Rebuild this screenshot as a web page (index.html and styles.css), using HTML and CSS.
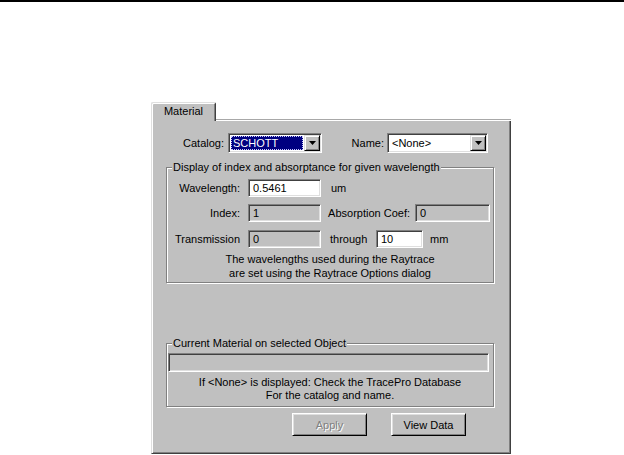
FILE: index.html
```html
<!DOCTYPE html>
<html lang="en">
<head>
    <meta charset="UTF-8">
    <title>Material</title>
    <link rel="stylesheet" href="styles.css">
</head>
<body>
    <div class="topline"></div>
    <div class="page">
        <div class="dialog">
            <div class="tabs">
                <div class="tab">Material</div>
                <div class="tab-rest"></div>
            </div>
            <div class="panel">
                <div class="catalog-row">
                    <span class="lbl lbl-catalog">Catalog:</span>
                    <div class="combo combo-catalog">
                        <span class="combo-text selected">SCHOTT</span>
                        <span class="drop-btn"><svg width="7" height="4" viewBox="0 0 7 4"><polygon points="0,0 7,0 3.5,4" fill="#000"/></svg></span>
                    </div>
                    <span class="lbl lbl-name">Name:</span>
                    <div class="combo combo-name">
                        <span class="combo-text">&lt;None&gt;</span>
                        <span class="drop-btn"><svg width="7" height="4" viewBox="0 0 7 4"><polygon points="0,0 7,0 3.5,4" fill="#000"/></svg></span>
                    </div>
                </div>

                <fieldset class="group group-index">
                    <legend>Display of index and absorptance for given wavelength</legend>
                    <div class="field-row">
                        <span class="lbl lbl-left">Wavelength:</span>
                        <div class="edit edit-main">0.5461</div>
                        <span class="unit unit-um">um</span>
                    </div>
                    <div class="field-row row-index">
                        <span class="lbl lbl-left">Index:</span>
                        <div class="edit edit-main disabled">1</div>
                        <span class="lbl lbl-absorb">Absorption Coef:</span>
                        <div class="edit edit-absorb disabled">0</div>
                    </div>
                    <div class="field-row row-trans">
                        <span class="lbl lbl-left">Transmission</span>
                        <div class="edit edit-main disabled">0</div>
                        <span class="lbl-through">through</span>
                        <div class="edit edit-through">10</div>
                        <span class="unit unit-mm">mm</span>
                    </div>
                    <p class="note note-index">The wavelengths used during the Raytrace<br>are set using the Raytrace Options dialog</p>
                </fieldset>

                <fieldset class="group group-current">
                    <legend>Current Material on selected Object</legend>
                    <div class="edit edit-current disabled"></div>
                    <p class="note note-current">If &lt;None&gt; is displayed: Check the TracePro Database<br>For the catalog and name.</p>
                </fieldset>

                <div class="button-row">
                    <button class="btn" disabled>Apply</button>
                    <button class="btn">View Data</button>
                </div>
            </div>
        </div>
    </div>
</body>
</html>
```

FILE: styles.css
```css
* {
    box-sizing: border-box;
}

body {
    margin: 0;
    background-color: #fff;
    font-family: "Liberation Sans", Arial, sans-serif;
    font-size: 11px;
    color: #000;
}

.topline {
    height: 2px;
    background-color: #000;
}

.page {
    padding: 100px 0 0 151px;
}

.dialog {
    width: 360px;
}

/* Tab strip */
.tabs {
    display: flex;
    height: 19px;
}

.tab {
    width: 65px;
    height: 19px;
    padding-top: 2px;
    text-align: center;
    background-color: #c0c0c0;
    border-top: 1px solid #dfdfdf;
    border-left: 1px solid #dfdfdf;
    border-right: 1px solid #404040;
    border-radius: 2px 2px 0 0;
    box-shadow: inset 1px 1px 0 #fff, inset -1px 0 0 #808080;
    line-height: 13px;
}

.tab-rest {
    flex: 1;
    border-bottom: 1px solid #fff;
    box-shadow: inset 0 -1px 0 #a8a8a8;
}

.panel {
    height: 333px;
    background-color: #c0c0c0;
    border-left: 1px solid #dfdfdf;
    border-right: 1px solid #404040;
    border-bottom: 1px solid #404040;
    box-shadow: inset 1px 0 0 #fff, inset -1px -1px 0 #808080;
    padding-top: 12px;
}

.lbl {
    display: inline-block;
    text-align: right;
    white-space: nowrap;
}

/* Catalog / Name row */
.catalog-row {
    display: flex;
    align-items: center;
    height: 20px;
}

.lbl-catalog {
    width: 72px;
    margin-right: 4px;
}

.lbl-name {
    width: 62px;
    margin-right: 3px;
}

.combo {
    display: flex;
    height: 20px;
    padding: 2px;
    background-color: #fff;
    border: 1px solid;
    border-color: #808080 #fff #fff #808080;
    box-shadow: inset 1px 1px 0 #404040, inset -1px -1px 0 #dfdfdf;
}

.combo-catalog {
    width: 94px;
}

.combo-name {
    width: 101px;
}

.combo-text {
    flex: 1;
    padding-left: 2px;
    line-height: 14px;
}

.combo-text.selected {
    margin: 0 1px 0 0;
    background-color: #000080;
    color: #fff;
    outline: 1px dotted #c8c8ff;
    outline-offset: -1px;
}

.drop-btn {
    display: flex;
    align-items: center;
    justify-content: center;
    width: 16px;
    height: 16px;
    margin: -1px -1px 0 0;
    background-color: #c0c0c0;
    border: 1px solid;
    border-color: #dfdfdf #000 #000 #dfdfdf;
    box-shadow: inset 1px 1px 0 #fff, inset -1px -1px 0 #808080;
}

/* Group boxes */
.group {
    margin: 8px 0 0 14px;
    width: 328px;
    padding: 0;
    border: 1px solid #808080;
    box-shadow: 1px 1px 0 #fff, inset 1px 1px 0 #fff;
}

.group legend {
    margin-left: 5px;
    padding: 0 1px;
    line-height: 13px;
    background-color: #c0c0c0;
}

.group-index {
    padding: 5px 0 2px 0;
}

.field-row {
    display: flex;
    align-items: center;
    height: 18px;
}

.row-index {
    margin-top: 7px;
}

.row-trans {
    margin-top: 8px;
}

.lbl-left {
    width: 73px;
    margin-right: 8px;
}

.lbl-absorb {
    width: 89px;
    margin-right: 5px;
}

.lbl-through {
    width: 46px;
    margin-left: 9px;
}

.unit-um {
    margin-left: 10px;
}

.unit-mm {
    margin-left: 7px;
}

.edit {
    height: 18px;
    padding: 1px 0 0 4px;
    line-height: 14px;
    background-color: #fff;
    border: 1px solid;
    border-color: #808080 #fff #fff #808080;
    box-shadow: inset 1px 1px 0 #404040, inset -1px -1px 0 #dfdfdf;
}

.edit.disabled {
    background-color: #c0c0c0;
}

.edit-main {
    width: 73px;
}

.edit-absorb {
    width: 75px;
}

.edit-through {
    width: 47px;
}

.note {
    margin: 4px 0 0 0;
    text-align: center;
    line-height: 14px;
}

.group-current {
    margin-top: 54px;
    padding: 3px 0 4px 0;
}

.edit-current {
    width: 321px;
    height: 19px;
    margin-left: 1px;
}

.note-current {
    line-height: 13px;
}

/* Buttons */
.button-row {
    display: flex;
    gap: 24px;
    margin-top: 6px;
    padding-left: 140px;
}

.btn {
    width: 75px;
    height: 23px;
    padding: 0;
    font-family: inherit;
    font-size: 11px;
    color: #000;
    background-color: #c0c0c0;
    border: 1px solid;
    border-color: #fff #000 #000 #fff;
    box-shadow: inset 1px 1px 0 #dfdfdf, inset -1px -1px 0 #808080;
}

.btn:disabled {
    color: #808080;
    text-shadow: 1px 1px 0 #fff;
}
```
